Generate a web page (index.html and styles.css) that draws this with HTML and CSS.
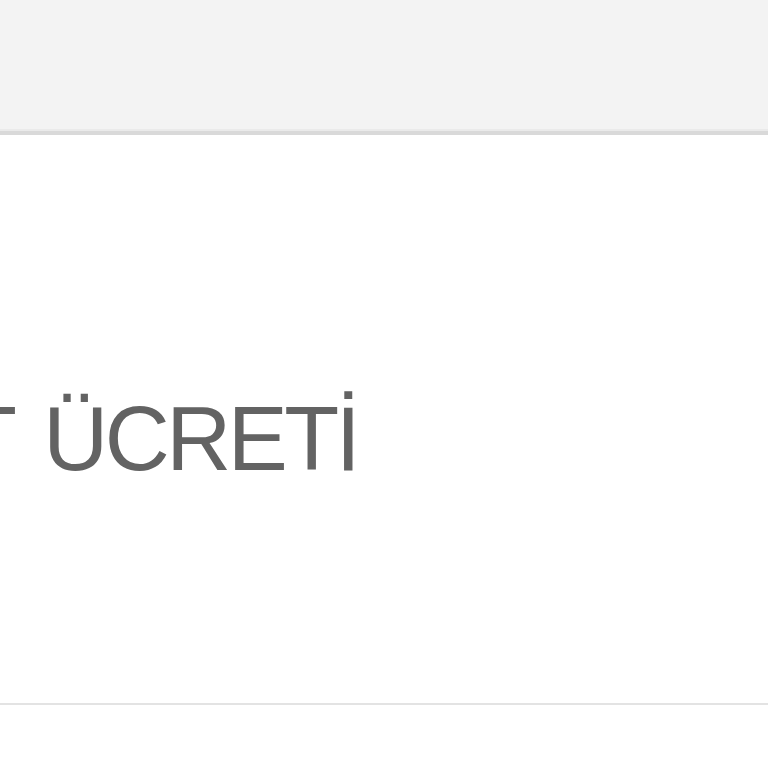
FILE: index.html
```html
<!DOCTYPE html>
<html lang="tr">
<head>
<meta charset="utf-8">
<link rel="stylesheet" href="styles.css">
</head>
<body>
<div class="topbar"></div>
<section class="row">
  <div class="label">TESLİMAT ÜCRETİ</div>
</section>
</body>
</html>
```
FILE: styles.css
```css
html, body {
  margin: 0;
  padding: 0;
  background: #ffffff;
  overflow: hidden;
}
.topbar {
  height: 129px;
  background: #f3f3f3;
  border-bottom: 2px solid #eaeaea;
  box-shadow: 0 4px 0 0 #d9d9d9;
  margin-bottom: 4px;
}
.row {
  box-sizing: border-box;
  height: 570px;
  padding-top: 259px;
  border-bottom: 2px solid #e3e3e3;
  overflow: hidden;
}
.label {
  font-family: "Liberation Sans", Arial, sans-serif;
  font-size: 90px;
  line-height: 90px;
  letter-spacing: -3.5px;
  word-spacing: 10px;
  color: #636363;
  white-space: nowrap;
  margin-left: -392px;
}
```
